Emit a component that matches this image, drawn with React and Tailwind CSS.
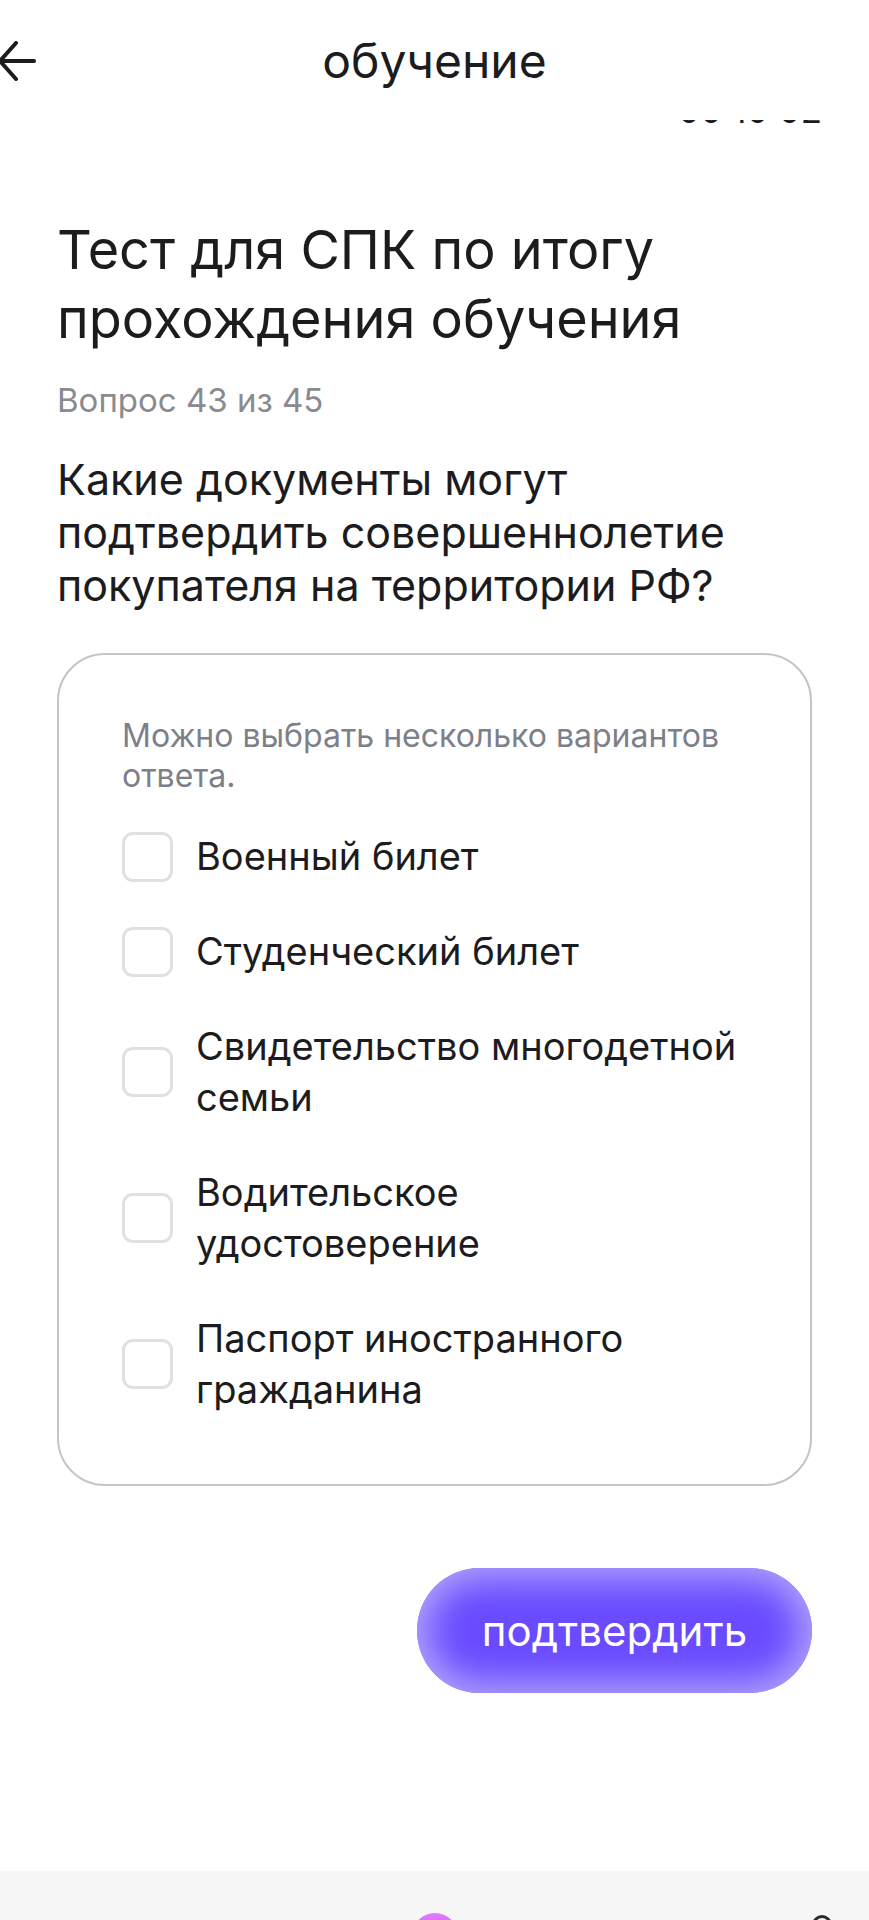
import { useState } from 'react'

const OPTIONS = [
  ['Военный билет'],
  ['Студенческий билет'],
  ['Свидетельство многодетной', 'семьи'],
  ['Водительское', 'удостоверение'],
  ['Паспорт иностранного', 'гражданина'],
]

function BackArrow() {
  return (
    <svg width="40" height="40" viewBox="0 0 40 40" fill="none" stroke="#1c1c1e" strokeWidth="4" strokeLinecap="round" strokeLinejoin="round">
      <path d="M37 20H3" />
      <path d="M19 2L3 20l16 18" />
    </svg>
  )
}

function Option({ lines, checked, onToggle }) {
  return (
    <button type="button" onClick={onToggle} className="flex items-center gap-[23px] text-left">
      <span
        className={`w-[51px] h-[50px] shrink-0 rounded-[11px] border-[3px] ${checked ? 'border-[#6c50ff] bg-[#6c50ff]' : 'border-[#e0e0e0] bg-white'}`}
      />
      <span className="text-[38px] leading-[51px] text-[#1c1c1e]">
        {lines.map((l, i) => (
          <span key={i} className="block">{l}</span>
        ))}
      </span>
    </button>
  )
}

export default function App() {
  const [checked, setChecked] = useState([])

  const toggle = (i) => {
    setChecked((c) => (c.includes(i) ? c.filter((x) => x !== i) : [...c, i]))
  }

  return (
    <div className="w-[869px] min-h-[1920px] bg-white flex flex-col overflow-hidden" style={{ fontFamily: 'Inter, "Noto Sans", sans-serif' }}>
      {/* Header */}
      <header className="h-[120px] flex items-start pt-[41px] relative">
        <div className="absolute left-[-3px] top-[41px]">
          <BackArrow />
        </div>
        <h1 className="w-full text-center text-[48px] leading-[40px] text-[#1c1c1e]">обучение</h1>
      </header>

      {/* timer scrolled under header, only its bottom edge shows */}
      <div className="h-[4px] overflow-hidden flex justify-end pr-[47px]">
        <span className="text-[35px] leading-[35px] -mt-[27px] text-[#1c1c1e]">00:10:02</span>
      </div>

      <main className="flex-1 px-[57px]">
        <h2 className="mt-[91px] text-[54px] leading-[69px] text-[#1c1c1e]">
          Тест для СПК по итогу
          <br />
          прохождения обучения
        </h2>
        <p className="mt-[27px] text-[33px] leading-[40px] text-[#8a8a8f]">Вопрос 43 из 45</p>
        <p className="mt-[33px] text-[43px] leading-[53px] text-[#1c1c1e]">
          Какие документы могут
          <br />
          подтвердить совершеннолетие
          <br />
          покупателя на территории РФ?
        </p>

        <div className="mt-[41px] border-2 border-[#c4c4c8] rounded-[48px] pl-[63px] pr-[30px] pt-[61px] pb-[69px]">
          <p className="text-[32px] leading-[40px] text-[#7d8088]">
            Можно выбрать несколько вариантов
            <br />
            ответа.
          </p>
          <div className="mt-[35px] flex flex-col gap-[44px]">
            {OPTIONS.map((lines, i) => (
              <Option key={i} lines={lines} checked={checked.includes(i)} onToggle={() => toggle(i)} />
            ))}
          </div>
        </div>

        <div className="flex justify-end mt-[82px]">
          <button
            type="button"
            className="w-[395px] h-[125px] rounded-full bg-[#6a4bff] shadow-[inset_0_0_36px_10px_#b3a8ff] text-white text-[42px]"
          >
            подтвердить
          </button>
        </div>
      </main>

      {/* Bottom nav */}
      <footer className="h-[49px] bg-[#f6f6f7] relative overflow-hidden">
        <div className="absolute left-[412px] top-[42px] w-[46px] h-[46px] rounded-full bg-gradient-to-b from-[#e07bff] to-[#b04cf0]" />
        <div className="absolute left-[812px] top-[44px] w-[20px] h-[20px] rounded-full border-[3px] border-[#2a2a2a]" />
      </footer>
    </div>
  )
}
